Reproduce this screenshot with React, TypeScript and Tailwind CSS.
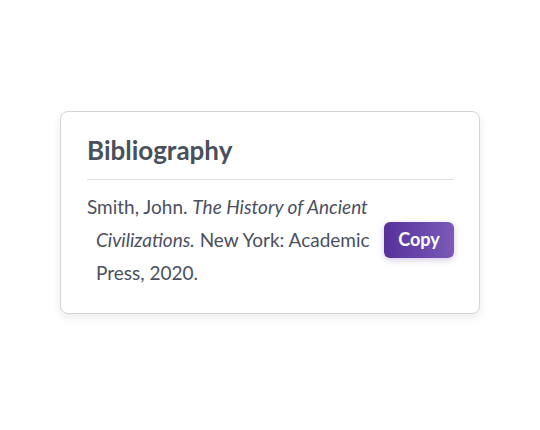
export default function App() {
  return (
    <div
      className="flex h-[430px] w-[540px] items-center justify-center bg-white"
      style={{ fontFamily: "Lato, 'Noto Sans', sans-serif" }}
    >
      <div className="mt-[-5px] w-[420px] rounded-lg border border-[#d4d4da] bg-white pr-[25px] pl-[26px] pt-[22px] pb-[24px] shadow-[0_4px_10px_rgba(0,0,0,0.08)]">
        <h2 className="border-b border-[#dcdde2] pb-[13px] text-[26px] leading-[32px] font-bold text-[#4a4f5c]">
          Bibliography
        </h2>
        <div className="mt-[10px] flex items-center justify-between">
          <p className="w-[292px] pl-[9px] -indent-[9px] text-[19px] leading-[33px] text-[#4b5060]">
            Smith, John. <i>The History of Ancient Civilizations.</i> New York:
            Academic Press, 2020.
          </p>
          <button className="h-[36px] w-[70px] rounded-md bg-gradient-to-r from-[#57309a] to-[#7a5bb8] text-[18px] font-bold text-white shadow-[0_2px_6px_rgba(80,40,150,0.25)]">
            Copy
          </button>
        </div>
      </div>
    </div>
  )
}
